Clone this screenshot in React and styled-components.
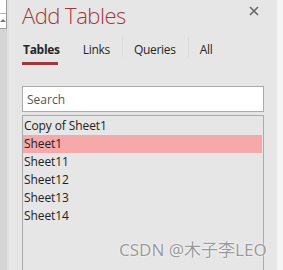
import React from "react";
import styled, { createGlobalStyle } from "styled-components";

const GlobalStyle = createGlobalStyle`
  html, body {
    margin: 0;
    padding: 0;
    background: #f3f3f3;
    overflow: hidden;
  }
  body {
    font-family: "Open Sans", "Noto Sans", sans-serif;
  }
`;

const Screen = styled.div`
  display: flex;
  width: 283px;
  height: 270px;
  position: relative;
  overflow: hidden;
`;

const Gutter = styled.div`
  width: 7px;
  display: flex;
  flex-direction: column;
  background: #d4d4d4;
  border-right: 2px solid #e0e0e0;
`;

const GutterBox = styled.div`
  height: 29px;
  background: #fff;
  border-right: 1px solid #9a9a9a;
  border-bottom: 1px solid #9a9a9a;
  box-sizing: border-box;
  position: relative;
`;

const GutterLine = styled.div`
  height: 13px;
  border-bottom: 1px solid #b8b8b8;
`;

const Panel = styled.div`
  width: 268px;
  background: #e6e6e6;
  padding-left: 13px;
  box-sizing: border-box;
  display: flex;
  flex-direction: column;
  position: relative;
`;

const Header = styled.div`
  display: flex;
  justify-content: space-between;
  align-items: flex-start;
  height: 32px;
`;

const Title = styled.h1`
  margin: 0;
  padding-top: 1px;
  font-size: 22px;
  line-height: 28px;
  font-weight: 300;
  color: #a4373a;
  letter-spacing: -0.5px;
`;

const Close = styled.button`
  border: none;
  background: none;
  padding: 0;
  margin: 6px 18px 0 0;
  width: 10px;
  height: 10px;
  display: flex;
`;

const Tabs = styled.div`
  display: flex;
  align-items: stretch;
  height: 34px;
`;

const Tab = styled.div`
  position: relative;
  display: flex;
  align-items: center;
  padding: 0 12px;
  font-size: 12px;
  letter-spacing: -0.3px;
  color: #262626;
  font-weight: ${(p) => (p.$active ? 700 : 400)};
  &:first-child {
    padding-left: 1px;
    padding-right: 11px;
  }
  & + &::before {
    content: "";
    position: absolute;
    left: 0;
    top: 5px;
    bottom: 9px;
    width: 1px;
    background: #dadada;
  }
  &::after {
    content: "";
    display: ${(p) => (p.$active ? "block" : "none")};
    position: absolute;
    left: 0;
    width: 36px;
    bottom: 1px;
    height: 3px;
    background: #a4373a;
  }
`;

const SearchBox = styled.div`
  margin-top: 20px;
  width: 242px;
  height: 26px;
  box-sizing: border-box;
  background: #fff;
  border: 1px solid #ababab;
  display: flex;
  align-items: center;
  padding-left: 4px;
  font-size: 12px;
  color: #555;
`;

const List = styled.div`
  margin-top: 3px;
  width: 242px;
  flex: 1;
  box-sizing: border-box;
  border: 1px solid #ababab;
  border-bottom: none;
  padding-top: 1px;
`;

const Row = styled.div`
  height: 18px;
  line-height: 18px;
  margin-right: 1px;
  padding-left: 1px;
  font-size: 12px;
  letter-spacing: -0.1px;
  color: #222;
  background: ${(p) => (p.$selected ? "#f6a9ab" : "transparent")};
`;

const RightEdge = styled.div`
  flex: 1;
  background: #f5f5f5;
`;

const Watermark = styled.div`
  position: absolute;
  left: 119px;
  top: 236px;
  font-family: "Noto Sans", "Noto Sans CJK SC", sans-serif;
  font-size: 17px;
  color: #9a9a9a;
  text-shadow: 0 0 2px #fff, 0 0 1px #fff;
  white-space: nowrap;
`;

const tables = ["Copy of Sheet1", "Sheet1", "Sheet11", "Sheet12", "Sheet13", "Sheet14"];

export default function App() {
  return (
    <>
      <GlobalStyle />
      <Screen>
        <Gutter>
          <GutterBox>
            <GutterLine />
            <svg width="6" height="4" viewBox="0 0 6 4" style={{ position: "absolute", left: 0, top: 18 }}>
              <path d="M0 4 L3 1 L6 4 Z" fill="#777" />
            </svg>
          </GutterBox>
        </Gutter>
        <Panel>
          <Header>
            <Title>Add Tables</Title>
            <Close aria-label="close">
              <svg width="10" height="10" viewBox="0 0 10 10">
                <path d="M1 1 L9 9 M9 1 L1 9" stroke="#666" strokeWidth="1.6" />
              </svg>
            </Close>
          </Header>
          <Tabs>
            <Tab $active>Tables</Tab>
            <Tab>Links</Tab>
            <Tab>Queries</Tab>
            <Tab>All</Tab>
          </Tabs>
          <SearchBox>Search</SearchBox>
          <List>
            {tables.map((t) => (
              <Row key={t} $selected={t === "Sheet1"}>
                {t}
              </Row>
            ))}
          </List>
        </Panel>
        <RightEdge />
        <Watermark>CSDN @木子李LEO</Watermark>
      </Screen>
    </>
  );
}
